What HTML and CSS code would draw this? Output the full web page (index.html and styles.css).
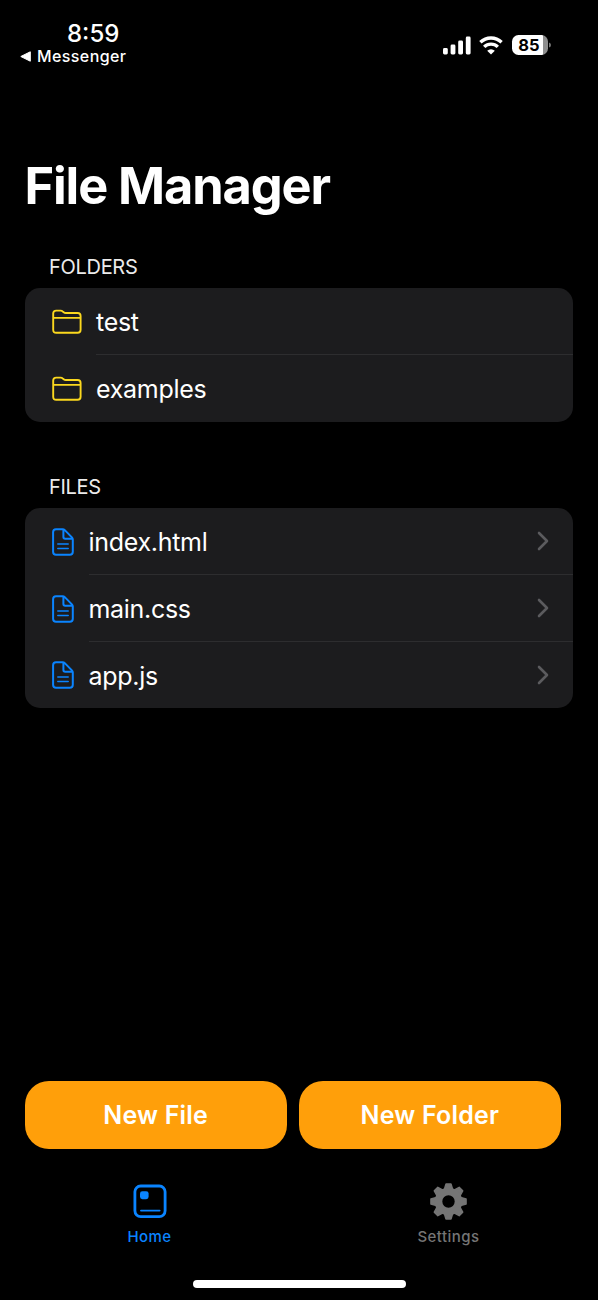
FILE: index.html
```html
<!DOCTYPE html>
<html lang="en">
<head>
    <meta charset="UTF-8">
    <meta name="viewport" content="width=device-width, initial-scale=1.0">
    <title>File Manager</title>
    <link rel="stylesheet" href="styles.css">
</head>
<body>
    <!-- Shared icons -->
    <svg class="sprite" width="0" height="0">
        <symbol id="icon-folder" viewBox="0 0 30 26">
            <path d="M1.2 19.8V4.6Q1.2 1.6 4.2 1.6H8.6Q9.8 1.6 10.7 2.4L11.7 3.2Q12.6 4 13.8 4H25.6Q28.6 4 28.6 7V20.8Q28.6 23.8 25.6 23.8H4.2Q1.2 23.8 1.2 20.8ZM1.2 8.9H28.6" fill="none" stroke="currentColor" stroke-width="1.9"/>
        </symbol>
        <symbol id="icon-file" viewBox="0 0 22 28">
            <path d="M4 1.2H10.6Q11.9 1.2 12.8 2.1L19.9 9.4Q20.8 10.3 20.8 11.6V23.8Q20.8 26.8 17.8 26.8H4Q1.1 26.8 1.1 23.8V4.2Q1.1 1.2 4 1.2ZM11.4 1.4V9Q11.4 10.8 13.2 10.8H20.6" fill="none" stroke="currentColor" stroke-width="2"/>
            <path d="M5.8 16.1H16.2M5.8 20.6H16.2" fill="none" stroke="currentColor" stroke-width="1.5" stroke-linecap="round"/>
        </symbol>
        <symbol id="icon-chevron" viewBox="0 0 12 20">
            <path d="M2 2L10 10L2 18" fill="none" stroke="currentColor" stroke-width="2.6" stroke-linecap="round" stroke-linejoin="round"/>
        </symbol>
    </svg>

    <!-- Status bar -->
    <header class="status-bar">
        <div class="status-left">
            <div class="time">8:59</div>
            <div class="back-app">
                <svg width="11" height="11" viewBox="0 0 11 11"><path d="M.8 5.5L10.3 .8V10.2Z" fill="#fff" stroke="#fff" stroke-width="1" stroke-linejoin="round"/></svg>
                <span>Messenger</span>
            </div>
        </div>
        <div class="status-right">
            <svg class="signal" width="28" height="19" viewBox="0 0 28 19" fill="#fff">
                <rect x="0" y="12" width="4.8" height="6.5" rx="1.4"/>
                <rect x="7.6" y="8.6" width="4.8" height="9.9" rx="1.4"/>
                <rect x="15.2" y="4.6" width="4.8" height="13.9" rx="1.4"/>
                <rect x="22.8" y=".5" width="4.8" height="18" rx="1.4"/>
            </svg>
            <svg class="wifi" width="24" height="19" viewBox="0 0 24 19">
                <g fill="none" stroke="#fff" stroke-width="3.4">
                    <path d="M1.4 6.3A15.3 15.3 0 0 1 22.6 6.3"/>
                    <path d="M5.2 10.9A9.8 9.8 0 0 1 18.8 10.9"/>
                </g>
                <path d="M12 18.6L8.2 14.7A5.4 5.4 0 0 1 15.8 14.7Z" fill="#fff"/>
            </svg>
            <div class="battery"><span>85</span></div>
            <svg class="battery-cap" width="3" height="8" viewBox="0 0 3 8"><path d="M0 1.5Q2 2 2 4Q2 6 0 6.5Z" fill="#777"/></svg>
        </div>
    </header>

    <!-- File list -->
    <main class="content">
        <h1 class="page-title">File Manager</h1>

        <section class="section folders">
            <h2 class="section-title">FOLDERS</h2>
            <ul class="list">
                <li class="row">
                    <svg class="folder-icon"><use href="#icon-folder"/></svg>
                    <div class="row-body"><span class="row-name">test</span></div>
                </li>
                <li class="row">
                    <svg class="folder-icon"><use href="#icon-folder"/></svg>
                    <div class="row-body"><span class="row-name">examples</span></div>
                </li>
            </ul>
        </section>

        <section class="section files">
            <h2 class="section-title">FILES</h2>
            <ul class="list">
                <li class="row">
                    <svg class="file-icon"><use href="#icon-file"/></svg>
                    <div class="row-body">
                        <span class="row-name">index.html</span>
                        <svg class="chevron"><use href="#icon-chevron"/></svg>
                    </div>
                </li>
                <li class="row">
                    <svg class="file-icon"><use href="#icon-file"/></svg>
                    <div class="row-body">
                        <span class="row-name">main.css</span>
                        <svg class="chevron"><use href="#icon-chevron"/></svg>
                    </div>
                </li>
                <li class="row">
                    <svg class="file-icon"><use href="#icon-file"/></svg>
                    <div class="row-body">
                        <span class="row-name">app.js</span>
                        <svg class="chevron"><use href="#icon-chevron"/></svg>
                    </div>
                </li>
            </ul>
        </section>
    </main>

    <!-- Actions -->
    <div class="actions">
        <button class="action-button">New File</button>
        <button class="action-button">New Folder</button>
    </div>

    <!-- Tab bar -->
    <nav class="tab-bar">
        <a class="tab active">
            <svg width="38" height="38" viewBox="0 0 38 38">
                <rect x="3.9" y="3" width="30.2" height="30.6" rx="5.8" fill="none" stroke="currentColor" stroke-width="2.8"/>
                <rect x="9" y="8.2" width="8.6" height="8" rx="2.4" fill="currentColor"/>
                <path d="M10 27.6H28.6" stroke="currentColor" stroke-width="1.9" stroke-linecap="round"/>
            </svg>
            <span>Home</span>
        </a>
        <a class="tab">
            <svg width="38" height="38" viewBox="-18.5 -18.5 38 38">
                <g fill="currentColor" stroke="currentColor" stroke-width="1.4" stroke-linejoin="round">
                    <path id="tooth" d="M-4.2 -12L-2.5 -17.6H2.5L4.2 -12Z"/>
                    <use href="#tooth" transform="rotate(45)"/>
                    <use href="#tooth" transform="rotate(90)"/>
                    <use href="#tooth" transform="rotate(135)"/>
                    <use href="#tooth" transform="rotate(180)"/>
                    <use href="#tooth" transform="rotate(225)"/>
                    <use href="#tooth" transform="rotate(270)"/>
                    <use href="#tooth" transform="rotate(315)"/>
                </g>
                <circle r="10" fill="none" stroke="currentColor" stroke-width="7.6"/>
            </svg>
            <span>Settings</span>
        </a>
    </nav>
    <div class="home-indicator"></div>
</body>
</html>
```
FILE: styles.css
```css
* {
    margin: 0;
    padding: 0;
    box-sizing: border-box;
}

body {
    height: 1300px;
    overflow: hidden;
    display: flex;
    flex-direction: column;
    background: #000;
    color: #fff;
    font-family: Inter, 'Liberation Sans', sans-serif;
}

.sprite {
    position: absolute;
}

/* Status bar */
.status-bar {
    height: 90px;
    display: flex;
    justify-content: space-between;
    padding: 20px 46px 0 20px;
}

.time {
    height: 27px;
    padding-left: 47px;
    font-size: 24px;
    font-weight: 500;
    line-height: 27px;
}

.back-app {
    display: flex;
    align-items: center;
    gap: 6px;
    height: 18px;
    font-size: 16px;
    font-weight: 500;
    line-height: 18px;
    letter-spacing: 0.4px;
}

.status-right {
    display: flex;
    align-items: center;
    height: 50px;
}

.signal {
    margin-right: 8px;
}

.wifi {
    margin-right: 9px;
}

.battery {
    width: 36px;
    height: 20px;
    padding-right: 2px;
    border-radius: 6.5px;
    background: linear-gradient(to right, #fff 31px, #8e8e8e 31px);
    color: #000;
    font-size: 16.5px;
    font-weight: 700;
    line-height: 20px;
    text-align: center;
}

.battery-cap {
    margin-left: 1px;
}

/* List */
.content {
    height: 991px;
    padding: 66px 25px 0 24.5px;
}

.page-title {
    height: 60px;
    font-size: 50.5px;
    font-weight: 700;
    line-height: 60px;
    letter-spacing: -1.1px;
    white-space: nowrap;
}

.section {
    padding-top: 38px;
}

.section-title {
    height: 34px;
    padding-left: 24.5px;
    font-size: 20px;
    font-weight: 400;
    line-height: 26px;
    letter-spacing: -0.3px;
    color: #ebebeb;
}

.list {
    list-style: none;
    background: #1c1c1e;
    border-radius: 15px;
}

.files {
    padding-top: 52px;
}

.row {
    height: 67px;
    display: flex;
    align-items: center;
    padding-left: 27px;
}

.row:last-child {
    height: 66.5px;
}

.row-body {
    flex: 1;
    height: 67px;
    display: flex;
    align-items: center;
    justify-content: space-between;
    padding-top: 1px;
    padding-right: 24.5px;
    border-bottom: 1px solid #2d2d2f;
}

.row:last-child .row-body {
    border-bottom: none;
}

.row-name {
    padding-top: 1px;
    font-size: 25px;
    letter-spacing: -0.3px;
}

.folder-icon {
    width: 30px;
    height: 26px;
    margin-right: 14.5px;
    color: #fbd81e;
}

.folders .row:last-child .folder-icon {
    margin-top: 1px;
}

.file-icon {
    width: 22px;
    height: 28px;
    margin-top: 1px;
    margin-right: 15px;
    color: #0a84ff;
}

.chevron {
    width: 12px;
    height: 20px;
    color: #5b5b5e;
}

/* Buttons */
.actions {
    display: flex;
    gap: 12px;
    padding: 0 37px 0 24.5px;
}

.action-button {
    flex: 1;
    height: 67.5px;
    border: none;
    border-radius: 24px;
    background: #ff9f0a;
    color: #fff;
    font-family: inherit;
    font-size: 25px;
    font-weight: 600;
    letter-spacing: 0.2px;
}

/* Tab bar */
.tab-bar {
    display: flex;
    height: 131px;
    padding-top: 34px;
}

.tab {
    flex: 1;
    display: flex;
    flex-direction: column;
    align-items: center;
    gap: 6px;
    color: #757575;
    font-size: 15px;
    font-weight: 500;
    line-height: 20px;
    letter-spacing: 0.45px;
}

.tab.active {
    color: #0a84ff;
}

.home-indicator {
    width: 213px;
    height: 8px;
    margin: 0 auto;
    border-radius: 4px;
    background: #fff;
}
```
